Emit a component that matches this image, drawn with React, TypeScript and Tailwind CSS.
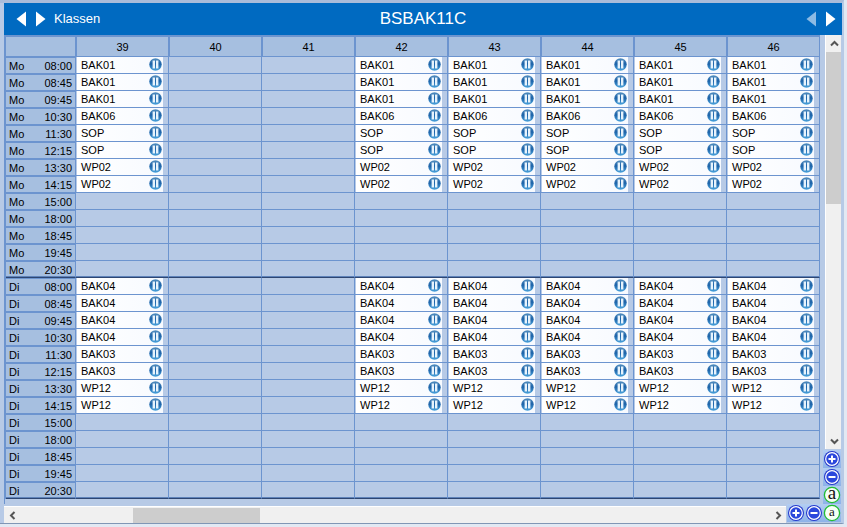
import { useId } from "react";

const times = ["08:00", "08:45", "09:45", "10:30", "11:30", "12:15", "13:30", "14:15", "15:00", "18:00", "18:45", "19:45", "20:30"];

const days = [
  { day: "Mo", subjects: ["BAK01", "BAK01", "BAK01", "BAK06", "SOP", "SOP", "WP02", "WP02"] },
  { day: "Di", subjects: ["BAK04", "BAK04", "BAK04", "BAK04", "BAK03", "BAK03", "WP12", "WP12"] },
];

const weeks = [39, 40, 41, 42, 43, 44, 45, 46];
const holidays = [40, 41];

function PauseIcon() {
  const id = useId();
  return (
    <svg className="mt-px block h-[13px] w-[13px] shrink-0" viewBox="0 0 13 13" aria-hidden="true">
      <defs>
        <linearGradient id={id} x1="0" y1="0" x2="0" y2="1">
          <stop offset="0" stopColor="#5590c0" />
          <stop offset="0.45" stopColor="#1c62a8" />
          <stop offset="1" stopColor="#4aa3dc" />
        </linearGradient>
      </defs>
      <circle cx="6.5" cy="6.5" r="6.2" fill={`url(#${id})`} />
      <rect x="3.6" y="2.5" width="2.4" height="8" fill="#e6f3fd" />
      <rect x="7" y="2.5" width="2.4" height="8" fill="#e6f3fd" />
    </svg>
  );
}

function Triangle({ left, faded }: { left?: boolean; faded?: boolean }) {
  return (
    <svg className="block h-4 w-[10px]" viewBox="0 0 10 16" aria-hidden="true">
      <path d={left ? "M10 0.5V15.5L0.5 8Z" : "M0 0.5V15.5L9.5 8Z"} fill={faded ? "#8dbbe4" : "#ffffff"} />
    </svg>
  );
}

const chevrons = {
  up: "M1 6.5L4.5 3L8 6.5",
  down: "M1 2.5L4.5 6L8 2.5",
  left: "M6.5 1L3 4.5L6.5 8",
  right: "M2.5 1L6 4.5L2.5 8",
};

function ScrollButton({ dir, label }: { dir: keyof typeof chevrons; label: string }) {
  return (
    <button type="button" aria-label={label} className="flex h-4 w-4 shrink-0 items-center justify-center">
      <svg className="block h-[9px] w-[9px]" viewBox="0 0 9 9" aria-hidden="true">
        <path d={chevrons[dir]} fill="none" stroke="#555555" strokeWidth="2" />
      </svg>
    </button>
  );
}

function ZoomButton({ kind, label }: { kind: "plus" | "minus" | "large" | "small"; label: string }) {
  const letter = kind === "large" || kind === "small";
  return (
    <button type="button" aria-label={label} className="block h-[18px] w-[18px] shrink-0 bg-linear-to-b from-[#b3cdf3] to-[#8db2e8]">
      <svg className="block h-[18px] w-[18px] overflow-visible" viewBox="0 0 18 18" aria-hidden="true">
        {letter ? (
          <>
            <circle cx="9" cy="9" r="7.6" fill="#f6fff6" stroke="#22bd32" strokeWidth="1.3" />
            <text x="9" y={kind === "large" ? 13 : 12} textAnchor="middle" fill="#111111" className={kind === "large" ? "font-['Liberation_Serif',serif] text-[19px]" : "font-['Liberation_Serif',serif] text-[13px]"}>
              a
            </text>
          </>
        ) : (
          <>
            <circle cx="9" cy="9" r="8" fill="#2438cc" />
            <circle cx="9" cy="9" r="6.3" fill="#2b47dc" stroke="#ffffff" strokeWidth="1.2" />
            <path d={kind === "plus" ? "M5.5 9H12.5M9 5.5V12.5" : "M5.5 9H12.5"} stroke="#ffffff" strokeWidth="2" />
          </>
        )}
      </svg>
    </button>
  );
}

function Timetable() {
  return (
    <table className="w-full table-fixed border-separate border-spacing-0 border-l border-[#6c94cf] text-[11px] leading-4">
      <colgroup>
        <col className="w-[70px]" />
      </colgroup>
      <thead>
        <tr className="bg-[#a6bfe0]">
          <td className="h-[22px] border-t-2 border-r border-b border-[#6c94cf] p-0" />
          {weeks.map((week) => (
            <th key={week} scope="col" className="h-[22px] border-t-2 border-r border-b border-l border-[#6c94cf] p-0 text-center font-normal">
              {week}
            </th>
          ))}
        </tr>
      </thead>
      {days.map(({ day, subjects }) => (
        <tbody key={day}>
          {times.map((time, i) => {
            const last = i === times.length - 1;
            const edge = last ? "border-b border-b-[#2d4673] shadow-[inset_0_-1px_0_#5f83ba]" : "border-b border-b-[#6c94cf]";
            return (
              <tr key={time}>
                <th scope="row" className={`${edge} h-[17px] border-t border-r border-t-[#6c94cf] border-r-[#6c94cf] bg-[#a6bfe0] p-0 align-top font-normal`}>
                  <div className="flex h-[14px] items-end justify-between pr-[3px] pl-[3px] leading-3">
                    <span>{day}</span>
                    <span>{time}</span>
                  </div>
                </th>
                {weeks.map((week) => (
                  <td key={week} className={`${edge} h-[17px] border-r border-r-[#6c94cf] p-0`}>
                    {subjects[i] && !holidays.includes(week) && (
                      <div className="mr-[5px] ml-px flex h-4 items-start justify-between bg-linear-to-r from-white to-[#f7faff] pr-px pl-1">
                        <span>{subjects[i]}</span>
                        <PauseIcon />
                      </div>
                    )}
                  </td>
                ))}
              </tr>
            );
          })}
        </tbody>
      ))}
    </table>
  );
}

export default function App() {
  return (
    <div className="flex min-h-screen flex-col bg-[#e2e9f3] font-['Liberation_Sans',Arial,sans-serif] text-black">
      <main className="mr-[3px] border-t-[3px] border-r-2 border-b border-t-[#a9bcda] border-r-[#b7cae6] border-b-[#8096b5] bg-[#b7cae6] pl-1">
        <header className="grid h-8 grid-cols-3 items-center bg-[#006ac1] px-[6px] text-white">
          <nav className="flex items-center gap-[10px] pl-[6px]">
            <button type="button" aria-label="Zurück">
              <Triangle left />
            </button>
            <button type="button" aria-label="Vor">
              <Triangle />
            </button>
            <a href="#klassen" className="-ml-[2px] text-[13px] leading-4">Klassen</a>
          </nav>
          <h1 className="text-center text-[17px] leading-5">BSBAK11C</h1>
          <div className="flex justify-end gap-[10px]">
            <button type="button" aria-label="Vorherige Wochen">
              <Triangle left faded />
            </button>
            <button type="button" aria-label="Nächste Wochen">
              <Triangle />
            </button>
          </div>
        </header>
        <div className="flex">
          <div className="min-w-0 flex-1 border-l border-[#6c94cf] pr-[5px] pb-[5px]">
            <Timetable />
          </div>
          <div className="flex w-[17px] flex-col pr-px">
            <div className="flex flex-1 flex-col border-l border-white bg-[#f0f0f0]">
              <ScrollButton dir="up" label="Nach oben" />
              <div className="mt-px h-[152px] bg-[#cdcdcd]" />
              <div className="mt-auto">
                <ScrollButton dir="down" label="Nach unten" />
              </div>
            </div>
            <div className="mt-px flex flex-col items-end">
              <ZoomButton kind="plus" label="Zeilen vergrößern" />
              <ZoomButton kind="minus" label="Zeilen verkleinern" />
              <ZoomButton kind="large" label="Größere Schrift" />
            </div>
          </div>
        </div>
        <div className="flex pr-px">
          <div className="mt-[2px] mr-px flex h-[17px] flex-1 items-center border-t border-white bg-[#f0f0f0]">
            <ScrollButton dir="left" label="Nach links" />
            <div className="h-[15px] flex-1">
              <div className="ml-[15%] h-[15px] w-[17%] bg-[#cdcdcd]" />
            </div>
            <ScrollButton dir="right" label="Nach rechts" />
          </div>
          <div className="flex">
            <ZoomButton kind="plus" label="Spalten vergrößern" />
            <ZoomButton kind="minus" label="Spalten verkleinern" />
            <ZoomButton kind="small" label="Kleinere Schrift" />
          </div>
        </div>
      </main>
    </div>
  );
}
